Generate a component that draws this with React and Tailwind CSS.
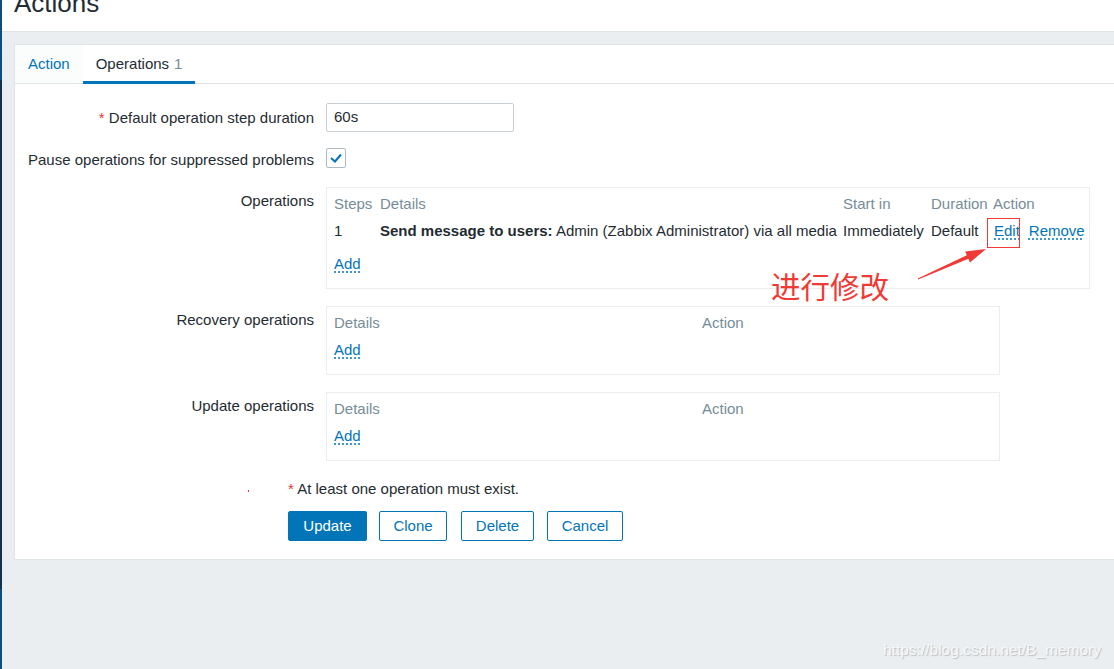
import React from "react";

const Link = ({ children }) => (
  <span className="text-[#0275b8] underline decoration-dotted decoration-[#0275b8] underline-offset-[3px]">
    {children}
  </span>
);

export default function App() {
  const opsCols = "grid grid-cols-[46px_463px_88px_62px_1fr]";
  return (
    <div
      className="relative flex h-[669px] w-[1114px] overflow-hidden bg-[#ebeef0] text-[15px] text-[#1f2c33]"
      style={{ fontFamily: '"Liberation Sans", Arial, sans-serif' }}
    >
      {/* sidebar edge */}
      <div className="flex w-[2px] flex-col">
        <div className="h-[80px] bg-[#0e4d7c]" />
        <div className="flex-1 bg-[#13324b]" />
        <div className="h-[80px] bg-[#0e4d7c]" />
      </div>

      <div className="flex flex-1 flex-col">
        {/* header */}
        <div className="h-[32px] overflow-hidden border-b border-[#dfe4e7] bg-white pl-[12px]">
          <h1 className="mt-[-10px] text-[26px] leading-[26px] text-[#1f2c33]">Actions</h1>
        </div>

        {/* card */}
        <div className="pl-[12px] pt-[12px]">
          <div className="border border-r-0 border-[#dfe4e7] bg-white">
            {/* tabs */}
            <div className="flex h-[39px] items-stretch border-b border-[#dfe4e7]">
              <div className="flex items-center bg-[#fbfcfc] px-[13px] text-[#0275b8]">Action</div>
              <div className="mb-[-1px] flex items-center border-b-[3px] border-[#0275b8] px-[13px] pt-[2px]">
                Operations <span className="ml-[5px] text-[#768d99]">1</span>
              </div>
            </div>

            {/* form */}
            <div className="pb-[18px] pt-[19px]">
              <div className="flex h-[29px] items-center">
                <div className="w-[299px] text-right leading-[17px]">
                  <span className="text-[#e33734]">*</span> Default operation step duration
                </div>
                <div className="ml-[12px] flex h-[29px] w-[188px] items-center rounded-[2px] border border-[#c8d0d5] px-[7px]">
                  60s
                </div>
              </div>

              <div className="mt-[16px] flex h-[20px] items-center">
                <div className="w-[299px] pt-[2px] text-right leading-[17px]">Pause operations for suppressed problems</div>
                <div className="ml-[12px] flex h-[20px] w-[20px] items-center justify-center rounded-[2px] border border-[#acbbc2]">
                  <svg width="14" height="12" viewBox="0 0 14 12">
                    <path d="M2 6 L6 9.5 L12 2.5" fill="none" stroke="#0275b8" strokeWidth="2" />
                  </svg>
                </div>
              </div>

              {/* Operations */}
              <div className="mt-[19px] flex items-start">
                <div className="w-[299px] pt-[5px] text-right leading-[17px]">Operations</div>
                <div className="ml-[12px] w-[764px] border border-[#ebeef0] pb-[16px] pl-[7px] pt-[7px] leading-[17px]">
                  <div className={`${opsCols} text-[#768d99]`}>
                    <div>Steps</div>
                    <div>Details</div>
                    <div>Start in</div>
                    <div>Duration</div>
                    <div>Action</div>
                  </div>
                  <div className={`${opsCols} mt-[10px] whitespace-nowrap`}>
                    <div>1</div>
                    <div>
                      <b>Send message to users:</b> Admin (Zabbix Administrator) via all media
                    </div>
                    <div>Immediately</div>
                    <div>Default</div>
                    <div className="flex gap-[9px] pl-[1px]">
                      <Link>Edit</Link>
                      <Link>Remove</Link>
                    </div>
                  </div>
                  <div className="mt-[16px]">
                    <Link>Add</Link>
                  </div>
                </div>
              </div>

              {/* Recovery operations */}
              <div className="mt-[17px] flex items-start">
                <div className="w-[299px] pt-[5px] text-right leading-[17px]">Recovery operations</div>
                <div className="ml-[12px] w-[674px] border border-[#ebeef0] pb-[16px] pl-[7px] pt-[7px] leading-[17px]">
                  <div className="grid grid-cols-[368px_1fr] text-[#768d99]">
                    <div>Details</div>
                    <div>Action</div>
                  </div>
                  <div className="mt-[10px]">
                    <Link>Add</Link>
                  </div>
                </div>
              </div>

              {/* Update operations */}
              <div className="mt-[17px] flex items-start">
                <div className="w-[299px] pt-[5px] text-right leading-[17px]">Update operations</div>
                <div className="ml-[12px] w-[674px] border border-[#ebeef0] pb-[16px] pl-[7px] pt-[7px] leading-[17px]">
                  <div className="grid grid-cols-[368px_1fr] text-[#768d99]">
                    <div>Details</div>
                    <div>Action</div>
                  </div>
                  <div className="mt-[10px]">
                    <Link>Add</Link>
                  </div>
                </div>
              </div>

              <div className="ml-[273px] mt-[19px] leading-[17px]">
                <span className="text-[#e33734]">*</span> At least one operation must exist.
              </div>

              <div className="ml-[273px] mt-[14px] flex">
                <button className="h-[30px] w-[79px] rounded-[2px] border border-[#0275b8] bg-[#0275b8] text-white">
                  Update
                </button>
                <button className="ml-[12px] h-[30px] w-[68px] rounded-[2px] border border-[#0275b8] bg-white text-[#0275b8]">
                  Clone
                </button>
                <button className="ml-[14px] h-[30px] w-[73px] rounded-[2px] border border-[#0275b8] bg-white text-[#0275b8]">
                  Delete
                </button>
                <button className="ml-[13px] h-[30px] w-[76px] rounded-[2px] border border-[#0275b8] bg-white text-[#0275b8]">
                  Cancel
                </button>
              </div>
            </div>
          </div>
        </div>
      </div>

      {/* annotation overlays */}
      <div className="absolute left-[987px] top-[218px] h-[30px] w-[33px] border border-[#f03a35]" />
      <svg className="absolute left-0 top-0" width="1114" height="669" viewBox="0 0 1114 669">
        <polygon
          points="917.8,278.5 966.8,255.2 965.2,251.5 986,249 970,262.5 968.4,258.8 918.2,279.5"
          fill="#f03a35"
        />
      </svg>
      <div
        className="absolute left-[771px] top-[269px] text-[29.5px] leading-[33px] text-[#f03a35]"
        style={{ fontFamily: '"Noto Sans CJK SC", sans-serif' }}
      >
        进行修改
      </div>
      <div className="absolute left-[248px] top-[490px] h-[2px] w-[1px] bg-[#e33734]" />
      <div
        className="absolute left-[883px] top-[641px] text-[15.5px] leading-[18px] text-[#f7f8f9]"
        style={{ textShadow: "1px 1px 1px #b8bec2" }}
      >
        https://blog.csdn.net/B_memory
      </div>
    </div>
  );
}
